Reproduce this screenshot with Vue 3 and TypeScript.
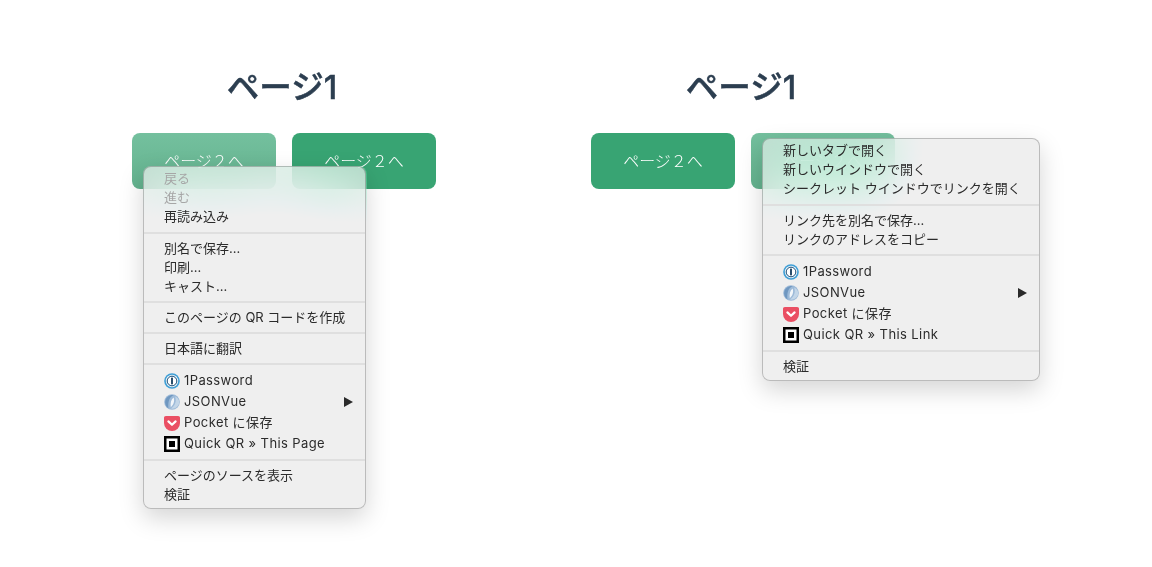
<script setup lang="ts">
type Row = { label: string; icon?: string; arrow?: boolean; disabled?: boolean };

const leftMenu: Row[][] = [
  [{ label: '戻る', disabled: true }, { label: '進む', disabled: true }, { label: '再読み込み' }],
  [{ label: '別名で保存...' }, { label: '印刷...' }, { label: 'キャスト...' }],
  [{ label: 'このページの QR コードを作成' }],
  [{ label: '日本語に翻訳' }],
  [
    { label: '1Password', icon: 'op' },
    { label: 'JSONVue', icon: 'json', arrow: true },
    { label: 'Pocket に保存', icon: 'pocket' },
    { label: 'Quick QR » This Page', icon: 'qr' },
  ],
  [{ label: 'ページのソースを表示' }, { label: '検証' }],
];

const rightMenu: Row[][] = [
  [{ label: '新しいタブで開く' }, { label: '新しいウインドウで開く' }, { label: 'シークレット ウインドウでリンクを開く' }],
  [{ label: 'リンク先を別名で保存...' }, { label: 'リンクのアドレスをコピー' }],
  [
    { label: '1Password', icon: 'op' },
    { label: 'JSONVue', icon: 'json', arrow: true },
    { label: 'Pocket に保存', icon: 'pocket' },
    { label: 'Quick QR » This Link', icon: 'qr' },
  ],
  [{ label: '検証' }],
];

const demos = [
  { menu: leftMenu, side: 'left' },
  { menu: rightMenu, side: 'right' },
];
</script>

<template>
  <main class="page">
    <section v-for="demo in demos" :key="demo.side" class="demo">
      <h1 class="title">ページ1</h1>
      <div class="buttons">
        <a class="btn" :class="{ hovered: demo.side === 'left' }">ページ２へ</a>
        <a class="btn" :class="{ hovered: demo.side === 'right' }">ページ２へ</a>
        <div class="menu" :class="demo.side">
          <template v-for="(group, g) in demo.menu" :key="g">
            <div v-if="g > 0" class="sep" :class="{ first: g === 1 }"></div>
            <div
              v-for="row in group"
              :key="row.label"
              class="row"
              :class="{ disabled: row.disabled, tall: row.icon }"
            >
              <svg v-if="row.icon === 'op'" class="icon" viewBox="0 0 16 16">
                <circle cx="8" cy="8" r="7.8" fill="#3f9fd6" />
                <circle cx="8" cy="8" r="6.2" fill="#e9f3f9" />
                <circle cx="8" cy="8" r="4.8" fill="#fff" stroke="#1d4f78" stroke-width="1" />
                <rect x="7.1" y="4.6" width="1.8" height="6.8" rx=".7" fill="#123a5c" />
              </svg>
              <svg v-else-if="row.icon === 'json'" class="icon" viewBox="0 0 16 16">
                <circle cx="8" cy="8" r="7.8" fill="#9dbad8" />
                <path d="M9.8 1.2C6 2.6 3.8 6 4.4 14.6 1.6 12.6.7 9.4 1.3 6.6 2 3.6 5.6.6 9.800 1.200Z" fill="#6f97c0" />
                <path d="M11 2.400c1.700 3.400.8 8.600-4 12.200 3.800.7 7.600-1.900 8.200-5.600.4-2.800-1.400-5.600-4.200-6.600Z" fill="#c3d6e8" />
                <path d="M9.600 3.600c-2.600 2-3.400 5.600-2.800 9.600 2.600-2 4.200-6 2.800-9.600Z" fill="#f2f6fa" />
              </svg>
              <svg v-else-if="row.icon === 'pocket'" class="icon" viewBox="0 0 16 16">
                <path d="M1.800 1h12.400C15.200 1 16 1.800 16 2.800V8a8 8 0 0 1-16 0V2.800C0 1.800.8 1 1.800 1Z" fill="#ea4f63" />
                <path d="M4.400 6.400 8 9.800l3.600-3.400" fill="none" stroke="#fff" stroke-width="2.200" stroke-linecap="round" stroke-linejoin="round" />
              </svg>
              <svg v-else-if="row.icon === 'qr'" class="icon" viewBox="0 0 16 16">
                <rect width="16" height="16" fill="#000" />
                <rect x="2.500" y="2.500" width="11" height="11" fill="#fff" />
                <rect x="5" y="5" width="6" height="6" fill="#000" />
              </svg>
              <span class="label">{{ row.label }}</span>
              <svg v-if="row.arrow" class="arrow" viewBox="0 0 9 10">
                <polygon points="0,0 9,5 0,10" fill="#2a2a2a" />
              </svg>
            </div>
          </template>
        </div>
      </div>
    </section>
  </main>
</template>

<style>
html,
body {
  margin: 0;
  background: #fff;
}
</style>

<style scoped>
.page {
  display: flex;
  gap: 155px;
  box-sizing: border-box;
  width: 1152px;
  height: 567px;
  overflow: hidden;
  padding: 68px 0 0 132px;
  background: #fff;
  font-family: Inter, "Noto Sans CJK JP", sans-serif;
}
.demo {
  display: flex;
  flex-direction: column;
  align-items: center;
  width: 304px;
}
.title {
  margin: 0 4px 0 0;
  height: 40px;
  line-height: 40px;
  font-size: 32.5px;
  font-weight: 500;
  -webkit-text-stroke: 0.5px #2c3e50;
  color: #2c3e50;
}
.buttons {
  position: relative;
  display: flex;
  gap: 16px;
  margin-top: 25px;
}
.btn {
  display: flex;
  align-items: center;
  justify-content: center;
  box-sizing: border-box;
  width: 144px;
  height: 56px;
  padding-bottom: 2px;
  border-radius: 8px;
  background: #38a473;
  color: #fff;
  font-size: 16px;
  font-weight: 300;
}
.btn.hovered {
  background: linear-gradient(#74c09e, #63b28e);
}
.menu {
  position: absolute;
  box-sizing: border-box;
  padding: 2px 0 4px;
  border: 1px solid rgba(0, 0, 0, 0.22);
  border-radius: 8px;
  background: rgba(232, 232, 232, 0.7);
  backdrop-filter: blur(28px) saturate(2.2) brightness(1.12);
  box-shadow: 0 9px 24px rgba(0, 0, 0, 0.17);
  color: #2b2b2b;
  font-size: 13px;
}
.menu.left {
  left: 10.5px;
  top: 33px;
  width: 223.5px;
  height: 343px;
}
.menu.right {
  left: 170.5px;
  top: 5px;
  width: 278px;
  height: 243px;
}
.row {
  display: flex;
  align-items: center;
  height: 19px;
  padding: 0 12px 0 20.5px;
  line-height: 19px;
  white-space: nowrap;
}
.row.tall {
  height: 21px;
  letter-spacing: 0.4px;
}
.row.disabled {
  color: #a6a6a6;
}
.label {
  flex: 1;
}
.icon {
  flex: none;
  width: 16px;
  height: 16px;
  margin-right: 4px;
}
.arrow {
  flex: none;
  width: 9px;
  height: 10px;
}
.sep {
  height: 2px;
  margin: 5px 0;
  background: #dfdfdf;
}
.sep.first {
  margin-top: 6px;
}
</style>
